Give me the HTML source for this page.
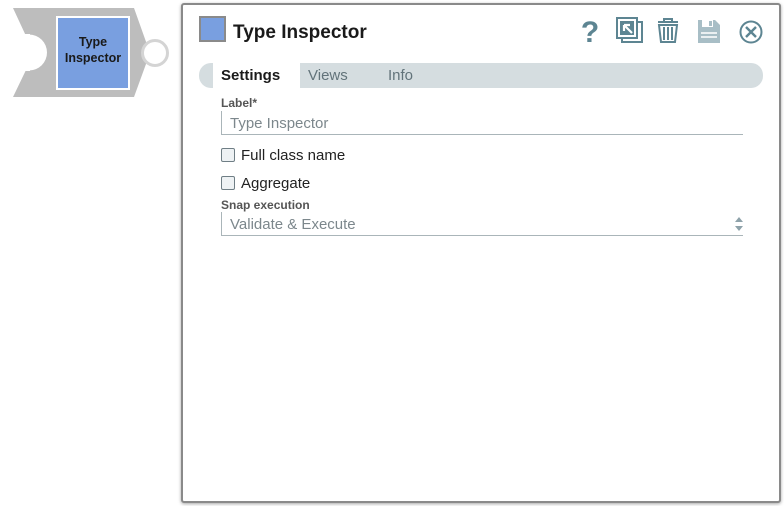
<!DOCTYPE html>
<html><head><meta charset="utf-8"><style>
*{margin:0;padding:0;box-sizing:border-box}
body{width:784px;height:506px;background:#fff;position:relative;overflow:hidden;font-family:"Liberation Sans",sans-serif}
.abs{position:absolute}
.panel{left:181px;top:3px;width:600px;height:500px;border:2px solid #8a8a8a;border-radius:3px;box-shadow:0 1px 3px rgba(0,0,0,.35);background:#fff}
.lbl{font-size:12px;font-weight:bold;color:#555}
.inp{border-left:1px solid #aab5b9;border-bottom:1px solid #aab5b9;height:24px;font-size:15px;color:#7c878c;padding-left:8px;line-height:26px}
.cb{width:14px;height:14px;border:1.5px solid #6f7e85;border-radius:2px;background:#eef2f4}
.cbt{font-size:15px;color:#222}
</style></head><body>
<svg class="abs" style="left:0;top:0" width="180" height="110">
<polygon points="13,8 134,8 150,53 134,97 13,97 26,70 26,36" fill="#bdbdbd"/>
<rect x="0" y="34" width="30" height="37" fill="#fff"/>
<circle cx="29" cy="52.5" r="18" fill="#fff"/>
<rect x="56" y="16" width="74" height="74" fill="#fff"/>
<rect x="58" y="18" width="70" height="70" fill="#799fe0"/>
<circle cx="155" cy="53" r="12.5" fill="#fff" stroke="#d4d4d4" stroke-width="3"/>
<text x="93" y="46" text-anchor="middle" font-family="Liberation Sans" font-weight="bold" font-size="12.5" fill="#1a1a1a">Type</text>
<text x="93" y="62" text-anchor="middle" font-family="Liberation Sans" font-weight="bold" font-size="12.5" fill="#1a1a1a">Inspector</text>
</svg>
<div class="abs panel"></div>
<div class="abs" style="left:199px;top:16px;width:27px;height:26px;background:#799fe0;border:2px solid #8a8a8a"></div>
<div class="abs" style="left:233px;top:22px;font-size:19px;font-weight:bold;color:#1a1a1a">Type Inspector</div>
<svg class="abs" style="left:578px;top:14px" width="190" height="34">
<text x="12" y="28" text-anchor="middle" font-family="Liberation Sans" font-weight="bold" font-size="30" fill="#5d8592">?</text>
<rect x="44" y="8" width="20" height="20" fill="none" stroke="#5d8592" stroke-width="2"/>
<rect x="39" y="4" width="20" height="20" fill="#fff" stroke="#5d8592" stroke-width="2"/>
<rect x="42" y="7" width="14" height="14" fill="#5d8592"/>
<path d="M46,11 L54,19 M46,11 h6 M46,11 v6" stroke="#fff" stroke-width="2.2" fill="none"/>
<path d="M80,8 h20 M86,8 v-3 h8 v3" stroke="#5d8592" stroke-width="2" fill="none"/>
<path d="M81,11 h18 l-2,17 h-14 z" fill="none" stroke="#5d8592" stroke-width="2"/>
<path d="M86,13 v13 M90,13 v13 M94,13 v13" stroke="#5d8592" stroke-width="2"/>
<path d="M120,6 h17 l5,5 v18 h-22 z" fill="#a8bec6"/>
<rect x="124" y="6" width="11" height="7" fill="#fff"/><rect x="131" y="7" width="3" height="5" fill="#a8bec6"/>
<path d="M123,19 h16 M123,23 h16" stroke="#fff" stroke-width="1.5"/>
<circle cx="173" cy="18" r="10.5" fill="none" stroke="#5d8592" stroke-width="2"/>
<path d="M168,13 l10,10 M178,13 l-10,10" stroke="#5d8592" stroke-width="2.4"/>
</svg>
<div class="abs" style="left:199px;top:63px;width:564px;height:25px;background:#d5dde0;border-radius:12px"></div>
<div class="abs" style="left:213px;top:63px;width:87px;height:25px;background:#fff"></div>
<div class="abs" style="left:221px;top:67px;font-size:15px;font-weight:bold;color:#1a1a1a">Settings</div>
<div class="abs" style="left:308px;top:67px;font-size:15px;color:#62737a">Views</div>
<div class="abs" style="left:388px;top:67px;font-size:15px;color:#62737a">Info</div>
<div class="abs lbl" style="left:221px;top:96px">Label*</div>
<div class="abs inp" style="left:221px;top:111px;width:522px">Type Inspector</div>
<div class="abs cb" style="left:221px;top:148px"></div>
<div class="abs cbt" style="left:241px;top:147px">Full class name</div>
<div class="abs cb" style="left:221px;top:176px"></div>
<div class="abs cbt" style="left:241px;top:175px">Aggregate</div>
<div class="abs lbl" style="left:221px;top:198px">Snap execution</div>
<div class="abs inp" style="left:221px;top:212px;width:522px">Validate &amp; Execute</div>
<svg class="abs" style="left:734px;top:216px" width="10" height="16"><path d="M1,6 L5,1 L9,6 Z M1,10 L5,15 L9,10 Z" fill="#8ea2aa"/></svg>
</body></html>
